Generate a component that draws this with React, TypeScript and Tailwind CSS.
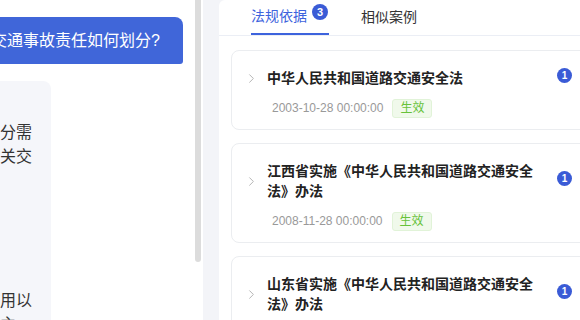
import { ChevronRight } from "lucide-react";

const answerLines = [
  "交通事故责任的划分主要依据以下原则：",
  "根据《道路交通安全法》相关规定，事故责任的划分需",
  "综合考虑当事人的过错程度及因果关系，具体由相关交",
  "通管理部门根据现场勘查和证据进行认定。",
  "事故责任一般分为以下几种：",
  "一、责任类型",
  "全部责任：一方当事人的过错导致事故发生。",
  "主要责任与次要责任：双方均有过错。",
  "同等责任：双方的过错程度相当，对事故所起的作用以",
  "及因果关系基本相同，应当各自承担同等的责任；主"
];

const laws = [
  { title: "中华人民共和国道路交通安全法", date: "2003-10-28 00:00:00", count: 1 },
  { title: "江西省实施《中华人民共和国道路交通安全法》办法", date: "2008-11-28 00:00:00", count: 1 },
  { title: "山东省实施《中华人民共和国道路交通安全法》办法", date: "2010-03-31 00:00:00", count: 1 }
];

function LawCard({ title, date, count }: { title: string; date: string; count: number }) {
  return (
    <div className="w-[372px] shrink-0 rounded-lg border border-[#ebedf0] bg-white pt-[17px] pb-[11px]">
      <div className="flex items-center">
        <div className="flex w-[35px] shrink-0 justify-end pr-[8px]">
          <ChevronRight size={15} strokeWidth={1.5} className="text-[#b0b0b0]" />
        </div>
        <div className="w-[278px] shrink-0 text-[14px] leading-[20px] font-bold text-[#222]">
          {title}
        </div>
        <div className="ml-[12px] -mt-[6px] flex h-[15px] w-[15px] items-center justify-center rounded-full bg-[#3a5bd6] text-[10px] font-bold text-white">
          {count}
        </div>
      </div>
      <div className="mt-[10px] flex h-[20px] items-center pl-[40px]">
        <span className="text-[12px] text-[#999]">{date}</span>
        <span className="ml-[9px] flex h-[19px] items-center rounded-[3px] border border-[#e1f3d8] bg-[#f0f9eb] px-[7px] text-[12px] text-[#67c23a]">
          生效
        </span>
      </div>
    </div>
  );
}

export default function App() {
  return (
    <div
      className="flex h-[320px] w-[580px] overflow-hidden bg-[#f3f4f8]"
      style={{ fontFamily: '"Liberation Sans", "Noto Sans CJK SC", sans-serif' }}
    >
      <div className="flex w-[203px] shrink-0 bg-white">
        <div className="w-[195px] shrink-0 overflow-hidden">
          <div className="-ml-[368px] w-[563px] pr-[12px]">
            <div className="mt-[17px] flex justify-end">
              <div className="flex h-[47px] items-center rounded-lg rounded-br-[3px] bg-[#4066d9] pr-[23px] pl-[16px] text-[16px] whitespace-nowrap text-white">
                交通事故责任如何划分?
              </div>
            </div>
            <div className="mt-[17px] w-[419px] rounded-lg bg-[#f5f6fa] pt-[16px] pr-[19px] pb-[16px] pl-[16px] text-[16px] leading-[24px] text-[#333]">
              {answerLines.map((line, i) => (
                <div key={i} className="whitespace-nowrap">
                  {line}
                </div>
              ))}
            </div>
          </div>
        </div>
        <div className="w-[6px] shrink-0">
          <div className="h-[262px] w-[6px] rounded-b-full bg-[#dcdcdc]" />
        </div>
      </div>
      <div className="ml-[16px] flex min-w-0 flex-1 flex-col rounded-tl-md bg-white">
        <div className="flex h-[36px] shrink-0 items-stretch border-b border-[#ebeef5] pl-[32px]">
          <div className="flex border-b-2 border-[#3d63dd] pr-[1px]">
            <span className="self-center text-[14px] text-[#3d63dd]">法规依据</span>
            <span className="mt-[4px] ml-[5px] flex h-[16px] w-[16px] items-center justify-center rounded-full bg-[#3a5bd6] text-[11px] font-bold text-white">
              3
            </span>
          </div>
          <div className="ml-[32px] flex items-center text-[14px] text-[#333]">相似案例</div>
        </div>
        <div className="flex flex-col gap-[13px] pt-[14px] pl-[12px]">
          {laws.map((law) => (
            <LawCard key={law.title} {...law} />
          ))}
        </div>
      </div>
    </div>
  );
}
